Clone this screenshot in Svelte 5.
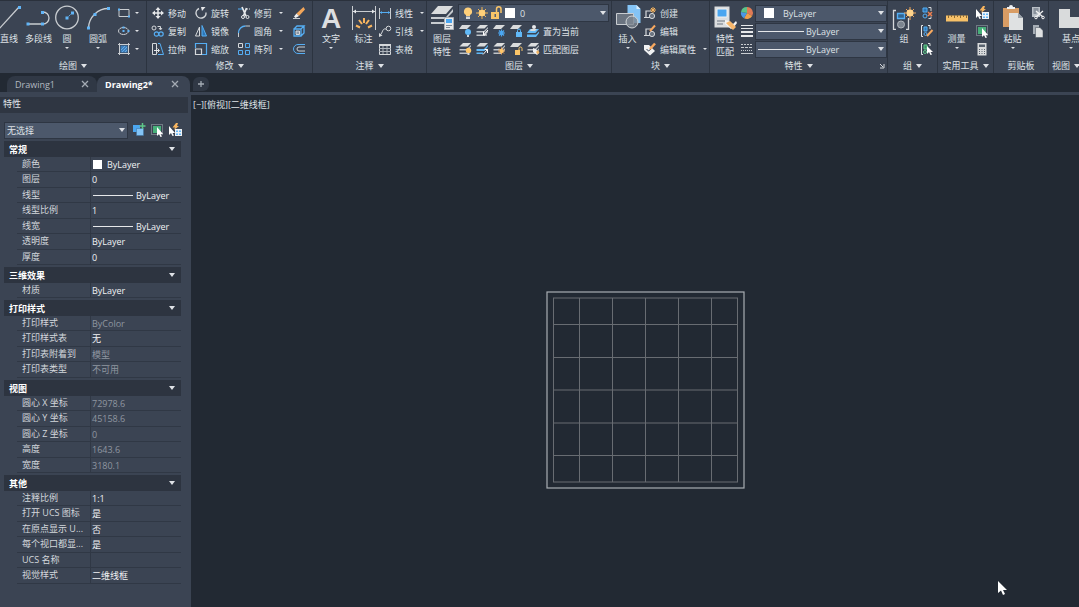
<script lang="ts">
  interface Prop {
    name: string;
    value: string;
    muted?: boolean;
    swatch?: boolean;
    line?: boolean;
  }

  interface Section {
    title: string;
    rows: Prop[];
  }

  const modifyTools = [
    [{ icon: 'move', label: '移动' }, { icon: 'copy', label: '复制' }, { icon: 'stretch', label: '拉伸' }],
    [{ icon: 'rotate', label: '旋转' }, { icon: 'mirror', label: '镜像' }, { icon: 'scale', label: '缩放' }],
    [
      { icon: 'trim', label: '修剪', more: true },
      { icon: 'fillet', label: '圆角', more: true },
      { icon: 'array', label: '阵列', more: true },
    ],
    [{ icon: 'erase', title: '删除' }, { icon: 'explode', title: '分解' }, { icon: 'offset', title: '偏移' }],
  ];

  const sections: Section[] = [
    {
      title: '常规',
      rows: [
        { name: '颜色', value: 'ByLayer', swatch: true },
        { name: '图层', value: '0' },
        { name: '线型', value: 'ByLayer', line: true },
        { name: '线型比例', value: '1' },
        { name: '线宽', value: 'ByLayer', line: true },
        { name: '透明度', value: 'ByLayer' },
        { name: '厚度', value: '0' },
      ],
    },
    { title: '三维效果', rows: [{ name: '材质', value: 'ByLayer' }] },
    {
      title: '打印样式',
      rows: [
        { name: '打印样式', value: 'ByColor', muted: true },
        { name: '打印样式表', value: '无' },
        { name: '打印表附着到', value: '模型', muted: true },
        { name: '打印表类型', value: '不可用', muted: true },
      ],
    },
    {
      title: '视图',
      rows: [
        { name: '圆心 X 坐标', value: '72978.6', muted: true },
        { name: '圆心 Y 坐标', value: '45158.6', muted: true },
        { name: '圆心 Z 坐标', value: '0', muted: true },
        { name: '高度', value: '1643.6', muted: true },
        { name: '宽度', value: '3180.1', muted: true },
      ],
    },
    {
      title: '其他',
      rows: [
        { name: '注释比例', value: '1:1' },
        { name: '打开 UCS 图标', value: '是' },
        { name: '在原点显示 U...', value: '否' },
        { name: '每个视口都显...', value: '是' },
        { name: 'UCS 名称', value: '' },
        { name: '视觉样式', value: '二维线框' },
      ],
    },
  ];

  const gridX = [33.5, 66.5, 99.5, 132.5, 165.5];
  const gridY = [33.5, 66.5, 99, 132, 164.5];

  let collapsed = $state<Record<string, boolean>>({});
  let activeTab = $state('Drawing2*');
</script>

{#snippet small(icon, label = '', more = false, title = '')}
  <button class="tool" aria-label={label || title}>
    <svg class="icon"><use href="#{icon}" /></svg>
    {#if label}<span>{label}</span>{/if}
    {#if more}<i class="dot"></i>{/if}
  </button>
{/snippet}

{#snippet big(icon, lines, more = false)}
  <button class="big">
    <svg class="icon-lg"><use href="#{icon}" /></svg>
    {#each lines as line}<span>{line}</span>{/each}
    {#if more}<i class="dot"></i>{/if}
  </button>
{/snippet}

{#snippet heading(text, more = true)}
  <h2 class="panel-title">{text}{#if more}<i class="caret"></i>{/if}</h2>
{/snippet}

<!-- Icon sprite -->
<svg class="sprite" aria-hidden="true">
  <symbol id="stack" viewBox="0 0 14 14">
    <path d="M5 1h8L9.5 4.5H1.500z" fill="#dcdedf" />
    <path d="M1.500 7H9l4-4v1.500L9.500 8.500h-8zM1.500 10.500H9l4-4V8l-3.500 4h-8z" fill="#bfc4c9" />
  </symbol>

  <symbol id="line" viewBox="0 0 26 26">
    <path d="M-1 25 19 3" stroke="#c9cdd1" stroke-width="1.3" />
    <path d="M18 2h3v3h-3z" fill="#62b5f7" />
  </symbol>
  <symbol id="polyline" viewBox="0 0 26 26">
    <path d="M2 20h15a6 6 0 0 0 0-12" fill="none" stroke="#c9cdd1" stroke-width="1.3" />
    <path d="M.5 18.500h3v3h-3zM15 18.500h3v3h-3zM15 7h3v3h-3z" fill="#62b5f7" />
  </symbol>
  <symbol id="circle" viewBox="0 0 26 26">
    <circle cx="13" cy="13.5" r="11.3" fill="none" stroke="#c9cdd1" stroke-width="1.3" />
    <path d="m13 14 5-5" stroke="#62b5f7" stroke-dasharray="2 1" />
    <path d="M11.500 12.500h3v3h-3zM17 7.500h3v3h-3z" fill="#62b5f7" />
  </symbol>
  <symbol id="arc" viewBox="0 0 26 26">
    <path d="M3.500 24A20 20 0 0 1 23.500 4.500" fill="none" stroke="#c9cdd1" stroke-width="1.3" />
    <path d="M2 22.500h3v3H2zM8.500 9h3v3h-3zM22 3h3v3h-3z" fill="#62b5f7" />
  </symbol>
  <symbol id="rect" viewBox="0 0 14 14">
    <path d="M2 3.500h10v7H2z" fill="none" stroke="#c9cdd1" />
    <path d="M1 2.500h2v2H1zM11 9.500h2v2h-2z" fill="#62b5f7" />
  </symbol>
  <symbol id="ellipse" viewBox="0 0 14 14">
    <ellipse cx="6.5" cy="7" rx="5" ry="3.5" fill="none" stroke="#c9cdd1" />
    <path d="M5.500 6h2v2h-2zM5.500 2.500h2v2h-2zM10.500 6h2v2h-2z" fill="#62b5f7" />
  </symbol>
  <symbol id="hatch" viewBox="0 0 14 14">
    <path d="M3.500 3.500h7v7h-7z" fill="#3d7fbd" />
    <path d="m4 8 4-4M5 10l5-5M8 10l2-2" stroke="#7cc0f5" stroke-width=".7" />
    <path d="M1 2.500h12M1 11.500h12M2.500 1v12M11.500 1v12" stroke="#c9cdd1" />
  </symbol>

  <symbol id="move" viewBox="0 0 14 14">
    <path d="M7 2v10M2 7h10" stroke="#e6e8ea" stroke-width="1.5" />
    <path d="m7 1 2.500 3h-5zM7 13l2.500-3h-5zM1 7l3-2.500v5zM13 7l-3-2.500v5z" fill="#e6e8ea" />
  </symbol>
  <symbol id="copy" viewBox="0 0 14 14">
    <circle cx="3" cy="4" r="2" fill="none" stroke="#d5d8db" />
    <path d="M6.500 2.500h3V5M8 4l1.500 2L11 4" fill="none" stroke="#d5d8db" />
    <circle cx="5.5" cy="10" r="2.2" fill="none" stroke="#55aef4" stroke-width="1.2" />
    <circle cx="10" cy="10" r="2.2" fill="none" stroke="#55aef4" stroke-width="1.2" />
  </symbol>
  <symbol id="stretch" viewBox="0 0 14 14">
    <path d="M1.500 1.500h4v11h-4z" fill="none" stroke="#d5d8db" />
    <path d="M7 1.500h2l3.500 11H7" fill="none" stroke="#55aef4" />
    <path d="M3 8.500h5M6.500 6.500l2 2-2 2" fill="none" stroke="#e6e8ea" />
  </symbol>
  <symbol id="rotate" viewBox="0 0 14 14">
    <path d="M5 2.500a5 5 0 1 0 7 4" fill="none" stroke="#d5d8db" stroke-width="1.4" />
    <path d="M7 1h4.500L8 5z" fill="#e6e8ea" />
  </symbol>
  <symbol id="mirror" viewBox="0 0 14 14">
    <path d="M5.500 3v9h-4z" fill="none" stroke="#d5d8db" />
    <path d="M8 1.500V12h4.500z" fill="#2e76b5" stroke="#55aef4" />
  </symbol>
  <symbol id="scale" viewBox="0 0 14 14">
    <path d="M1.500 6V1.500h11v11H8" fill="none" stroke="#55aef4" stroke-width="1.2" />
    <path d="M1.500 7h6v5.500h-6z" fill="none" stroke="#d5d8db" stroke-width="1.2" />
  </symbol>
  <symbol id="trim" viewBox="0 0 14 14">
    <path d="M1 3h5" stroke="#55aef4" /><path d="M9 3h4" stroke="#d5d8db" stroke-dasharray="2 1" />
    <path d="m5 1 4 9M9.500 2l-3 8" stroke="#e6e8ea" stroke-width="1.7" />
    <circle cx="6" cy="11" r="1.5" fill="none" stroke="#e6e8ea" /><circle cx="10.5" cy="11" r="1.5" fill="none" stroke="#e6e8ea" />
  </symbol>
  <symbol id="fillet" viewBox="0 0 14 14">
    <path d="M1.500 9a7 7 0 0 1 7-7" fill="none" stroke="#55aef4" stroke-width="1.3" />
    <path d="M1.500 9v4M8.500 2H13" stroke="#c9cdd1" />
  </symbol>
  <symbol id="array" viewBox="0 0 14 14">
    <path d="M1.500 1.500h4v4h-4z" fill="none" stroke="#d5d8db" />
    <path d="M8.500 1.500h4v4h-4zM1.500 8.500h4v4h-4zM8.500 8.500h4v4h-4z" fill="none" stroke="#55aef4" />
  </symbol>
  <symbol id="erase" viewBox="0 0 14 14">
    <path d="m11.500 1 1.500 2.500L7 10 4.500 7.500z" fill="#f2a65a" /><path d="M4.500 7.500 2 10.500l1.500 1.500L7 10z" fill="#f1f1f1" />
    <path d="M1 12.500h7" stroke="#c9cdd1" />
  </symbol>
  <symbol id="explode" viewBox="0 0 14 14">
    <path d="M2 5h7v7H2zM2 5l3-3h7L9 5M12 2v7l-3 3" fill="none" stroke="#55aef4" stroke-width="1.3" />
    <path d="M4 7h3.500v3.500H4z" fill="#8d98a6" stroke="#d5d8db" />
  </symbol>
  <symbol id="offset" viewBox="0 0 14 14">
    <path d="M13 2.500H6a4.500 4.500 0 0 0 0 9h7" fill="none" stroke="#55aef4" />
    <path d="M13 5H7a2 2 0 0 0 0 4h6" fill="none" stroke="#c9cdd1" />
  </symbol>

  <symbol id="dimension" viewBox="0 0 26 26">
    <path d="M1.500 2v24M24.500 2v24M2 7.500h22" stroke="#c9cdd1" />
    <path d="m2 7.500 3-2v4zM24 7.500l-3-2v4z" fill="#e6e8ea" />
    <path d="M13 14v5M8 16l3 4M18 16l-3 4M5 21.500l4 2M21 21.500l-4 2" stroke="#f8b55f" stroke-width="2" />
  </symbol>
  <symbol id="linear" viewBox="0 0 14 14">
    <path d="M1.500 2v11M12.500 2v11" stroke="#c9cdd1" /><path d="M2 6.500h10" stroke="#55aef4" />
    <path d="m2 6.500 2-1.500v3zM12 6.500 10 5v3z" fill="#55aef4" />
  </symbol>
  <symbol id="leader" viewBox="0 0 14 14">
    <circle cx="10.5" cy="4.5" r="2.3" fill="none" stroke="#d5d8db" />
    <path d="M8 5C4 4 5 9 2 11" fill="none" stroke="#d5d8db" /><path d="M1 9v4l3.500-1.500z" fill="#d5d8db" />
  </symbol>
  <symbol id="table" viewBox="0 0 14 14">
    <path d="M1.500 2.500h11v10h-11z" fill="none" stroke="#d5d8db" /><path d="M1 3h12" stroke="#d5d8db" stroke-width="2" />
    <path d="M1 6.500h12M1 9.500h12M5 4v8M9 4v8" stroke="#aeb4bb" />
  </symbol>

  <symbol id="layers" viewBox="0 0 26 26">
    <path d="M9 2h15l-7 8H2z" fill="#dadcdd" />
    <path d="M2 13h15l7-8v3l-7 7H2zM2 18h15l4-4v4l-2 2H2z" fill="#c8ccd0" />
    <path d="M15.500 13.500h9v12h-9z" fill="#e9eaeb" stroke="#aab0b7" /><path d="M17 15h6v4h-6z" fill="#4ba6f0" />
    <path d="M17 21.500h6M17 23.500h4" stroke="#7f8995" />
  </symbol>
  <symbol id="bulb" viewBox="0 0 14 14">
    <path d="M7 1.500a4 4 0 0 1 2 7.500v1H5V9a4 4 0 0 1 2-7.500z" fill="#ffd07a" /><path d="M5 10.500h4V13H5z" fill="#d5d8db" />
  </symbol>
  <symbol id="sun" viewBox="0 0 14 14">
    <path d="M7 1v12M1 7h12M3 3l8 8M11 3l-8 8" stroke="#f0b455" /><circle cx="7" cy="7" r="3.3" fill="#ffd07a" />
  </symbol>
  <symbol id="unlock" viewBox="0 0 14 14">
    <path d="M2 6h8v7H2z" fill="#f9c468" /><path d="M7.500 6V3A2 2 0 0 1 12 3v4" fill="none" stroke="#f9c468" stroke-width="1.5" />
    <path d="M5.500 8H7v3H5.500z" fill="#57606d" />
  </symbol>
  <symbol id="layer-off" viewBox="0 0 14 14">
    <path d="M4 1h9L9 5H1z" fill="#d9dbdc" /><circle cx="10" cy="8" r="3" fill="#61b9f8" /><path d="M9 11h2v2H9z" fill="#d5d8db" />
  </symbol>
  <symbol id="layer-iso" viewBox="0 0 14 14">
    <use href="#stack" /><path d="M13 6 8.500 11V7.500M8.500 11H12" fill="none" stroke="#fff" />
  </symbol>
  <symbol id="layer-freeze" viewBox="0 0 14 14">
    <path d="M4 1h9L9 5H1z" fill="#d9dbdc" /><circle cx="9.500" cy="9" r="2" fill="#4ba6f0" />
    <path d="M9.500 5.500v7M6 9h7M7 6.500l5 5M12 6.500l-5 5" stroke="#4ba6f0" stroke-width="1.2" />
  </symbol>
  <symbol id="layer-lock" viewBox="0 0 14 14">
    <path d="M4 1h9L9 5H1z" fill="#d9dbdc" /><path d="M7 8h6v5H7z" fill="#61b9f8" /><path d="M8.500 8V6.500a1.500 1.500 0 0 1 3 0V8" fill="none" stroke="#61b9f8" />
  </symbol>
  <symbol id="layer-current" viewBox="0 0 14 14">
    <path d="M4 5h9L9.500 9H1zM1 10.500h9l3-3V9l-3 4H1z" fill="#61b9f8" /><circle cx="8" cy="3" r="2" fill="#e6e8ea" /><path d="M5 5h6L9 7H4z" fill="#d9dbdc" />
  </symbol>
  <symbol id="layer-on" viewBox="0 0 14 14">
    <use href="#stack" /><circle cx="10.5" cy="8.5" r="2.7" fill="#ffc76a" /><path d="M9.500 11h2v2h-2z" fill="#d5d8db" />
  </symbol>
  <symbol id="layer-uniso" viewBox="0 0 14 14">
    <path d="M5 1h8L9.500 4.500h-8z" fill="#d9dbdc" /><path d="M1.500 7H9l4-4v1.500L9.500 9h-8zM1.500 10.500H8V12H1.500z" fill="#61b9f8" />
    <path d="m8 12.500 4.500-5M9.500 7.500h3V11" fill="none" stroke="#fff" />
  </symbol>
  <symbol id="layer-thaw" viewBox="0 0 14 14">
    <use href="#stack" /><path d="M9.500 5.500v7M6 9h7M7 6.500l5 5M12 6.500l-5 5" stroke="#f2a65a" /><circle cx="9.5" cy="9" r="2" fill="#ffc76a" />
  </symbol>
  <symbol id="layer-unlock" viewBox="0 0 14 14">
    <path d="M4 1h9L9 5H1z" fill="#d9dbdc" /><path d="M6 8h5v5H6z" fill="#f9c468" /><path d="M10 8V6.500a1.500 1.500 0 0 1 3 0V9" fill="none" stroke="#f9c468" />
  </symbol>
  <symbol id="layer-match" viewBox="0 0 14 14">
    <use href="#stack" /><path d="m7 6 3 1 3 4-2 2-4-3z" fill="#f1f1f1" /><path d="m10 10 2-2 1.500 2.500-2 2z" fill="#f2b566" />
  </symbol>

  <symbol id="insert" viewBox="0 0 26 26">
    <path d="M12.500 1h9l4 4v14h-13z" fill="#84c4f6" /><path d="M21.500 1v4h4z" fill="#d8ecfb" />
    <path d="M1.500 9.500h17v11h-17z" fill="#6b7480" stroke="#c9cdd1" />
    <circle cx="17" cy="18" r="6" fill="#7e8791" fill-opacity=".8" stroke="#d0d4d7" />
  </symbol>
  <symbol id="block-create" viewBox="0 0 14 14">
    <path d="M3 11V5h5M1 11.500h6" fill="none" stroke="#d5d8db" stroke-width="1.2" /><circle cx="9" cy="10" r="2.6" fill="#6b7480" stroke="#d5d8db" />
    <path d="M10 1v6M7 4h6M8 2l4 4M12 2 8 6" stroke="#f8b55f" />
  </symbol>
  <symbol id="block-edit" viewBox="0 0 14 14">
    <path d="M3 11V5h5M1 11.500h6" fill="none" stroke="#d5d8db" stroke-width="1.2" /><circle cx="9" cy="10" r="2.6" fill="#6b7480" stroke="#d5d8db" />
    <path d="m7 7 5-5.500" stroke="#f8a95f" stroke-width="2" />
  </symbol>
  <symbol id="attr-edit" viewBox="0 0 14 14">
    <path d="M1 3h5l6 6-5 4.500L1 8z" fill="#f0f1f2" /><path d="m3.500 7 2 2L8 7" fill="none" stroke="#3b4453" />
    <path d="m7 7 5-5.500" stroke="#f8a95f" stroke-width="2.5" />
  </symbol>

  <symbol id="match" viewBox="0 0 26 26">
    <path d="M2.500 2.500h15v21h-15z" fill="#dcdee0" /><path d="M5 5h10v8H5z" fill="#4ba6f0" stroke="#f1f1f1" />
    <path d="M5 17h8M5 20h6" stroke="#6b7480" /><path d="m13 16 4 1 4 3 3-3 1 2-3 4-3 2-6-5z" fill="#f3f3f3" />
    <path d="m14 19 4-2 6 6-3 3z" fill="#f7b76c" />
  </symbol>
  <symbol id="wheel" viewBox="0 0 14 14">
    <path d="M7 7V1a6 6 0 0 1 5.200 9z" fill="#e07b56" /><path d="M7 7 12.200 10A6 6 0 0 1 4 12.200z" fill="#f0a04b" />
    <path d="M7 7 4 12.200A6 6 0 0 1 1 6z" fill="#4b98e6" /><path d="M7 7 1 6a6 6 0 0 1 6-5z" fill="#5cc389" />
  </symbol>
  <symbol id="weights" viewBox="0 0 14 14"><path d="M1 1h12v1H1zM1 4h12v1H1zM1 7h12v2H1zM1 11h12v2H1z" fill="#e6e8ea" /></symbol>
  <symbol id="linetypes" viewBox="0 0 14 14">
    <path d="M1 2.500h12" stroke="#c9cdd1" stroke-dasharray="2 1" /><path d="M1 5.500h12" stroke="#c9cdd1" stroke-dasharray="3 1" />
    <path d="M1 8.500h12" stroke="#c9cdd1" stroke-dasharray="1 1" /><path d="M1 11.500h12" stroke="#c9cdd1" />
  </symbol>

  <symbol id="group" viewBox="0 0 26 26">
    <path d="M5 6.500H2.500v19H5M15 25.500h2.500V14" fill="none" stroke="#d5d8db" stroke-width="1.3" />
    <path d="M6.500 9.500h7v5h-7z" fill="#34658f" stroke="#55aef4" stroke-width="1.3" /><circle cx="10" cy="20.5" r="3.5" fill="#7b848f" stroke="#aeb4bb" />
    <path d="M19 3v13M13 9h12M15 5l8 8M23 5l-8 8" stroke="#f2a65a" /><circle cx="19" cy="9" r="3.5" fill="#ffd48c" />
  </symbol>
  <symbol id="ungroup" viewBox="0 0 14 14">
    <path d="M3 2h4v4H3z" fill="#2e76b5" stroke="#55aef4" /><circle cx="5" cy="10" r="2" fill="none" stroke="#55aef4" />
    <path d="M8.500 1.500H11V5M8.500 12.500H11v-2" fill="none" stroke="#d5d8db" /><path d="m8 6 4 4M12 6l-4 4" stroke="#f08050" stroke-width="1.5" />
  </symbol>
  <symbol id="group-edit" viewBox="0 0 14 14">
    <path d="M3 1.500H1.500v11H3M8 1.500h2V5" fill="none" stroke="#e6e8ea" /><path d="M4 3h3v4H4z" fill="#2e76b5" stroke="#55aef4" /><circle cx="5.5" cy="10" r="1.5" fill="none" stroke="#55aef4" />
    <path d="m7 12 5.500-6" stroke="#f8a95f" stroke-width="2" />
  </symbol>
  <symbol id="group-select" viewBox="0 0 14 14">
    <path d="M3 1.500H1.500v11H3M8 1.500h2V4" fill="none" stroke="#e6e8ea" /><path d="M4 3h3v4H4z" fill="#3a8a60" stroke="#5fc88a" /><circle cx="5" cy="10" r="1.5" fill="none" stroke="#5fc88a" />
    <path d="M7 4v8l2-2 1.500 3 1.500-.5L10.500 10H13z" fill="#fff" />
  </symbol>

  <symbol id="measure" viewBox="0 0 26 26">
    <path d="M2 11.500h22v6H2z" fill="#f7c168" /><path d="M4.500 11v3M7.500 11v2M10.500 11v3M13.500 11v2M16.500 11v3M19.500 11v2M22.500 11v3" stroke="#8a6a37" />
  </symbol>
  <symbol id="quick-select" viewBox="0 0 14 14">
    <path d="M1 3v9l2-2 1.500 3 1.500-.5L4.500 10H7z" fill="#fff" /><path d="M8 0 4.500 4.500H7L6 7l5-4H9l1-3z" fill="#f8b55f" />
    <path d="M7 6h7v7H7z" fill="#eef2f5" /><path d="M8 7.500h2V9H8zM11 7.500h2V9h-2zM8 10.500h2V12H8zM11 10.500h2V12h-2z" fill="#62b5f7" />
  </symbol>
  <symbol id="select-all" viewBox="0 0 14 14">
    <path d="M1.500 1.500h11v10h-11z" fill="none" stroke="#a9b0b9" stroke-dasharray="1 1" /><path d="M3 3h8v7H3z" fill="#48b07a" />
    <path d="M7 4v9l2-2 1.500 3 1.500-.5L10.500 11H13z" fill="#fff" />
  </symbol>
  <symbol id="calc" viewBox="0 0 14 14">
    <path d="M2.500 1h9v12.500h-9z" fill="#d9dbdc" /><path d="M4 2.500h6V5H4z" fill="#5a6470" />
    <path d="M4 7.500h6M4 9.500h6M4 11.500h6" stroke="#5a6470" stroke-dasharray="1 1.500" />
  </symbol>
  <symbol id="paste" viewBox="0 0 26 26">
    <path d="M3 4h16v19H3z" fill="#d89c64" /><path d="M7 5V3h2a2 2 0 0 1 4 0h2v2z" fill="#f0f1f2" />
    <path d="M9 9h9l5 5v12H9z" fill="#dfe1e2" /><path d="M18 9v5h5z" fill="#9ba2aa" />
  </symbol>
  <symbol id="cut" viewBox="0 0 14 14">
    <path d="M1 1h8v10H1z" fill="#b9bfc6" /><path d="M2.500 3h5M2.500 5h5M2.500 7h3" stroke="#596370" />
    <path d="m5 5 7 6M12 5l-7 6" stroke="#f1f1f1" stroke-width="1.3" /><circle cx="5" cy="11.5" r="1.3" fill="none" stroke="#f1f1f1" /><circle cx="12" cy="11.5" r="1.3" fill="none" stroke="#f1f1f1" />
  </symbol>
  <symbol id="pages" viewBox="0 0 14 14">
    <path d="M2 1h6v9H2z" fill="#a6adb5" /><path d="M4.500 3.500H9l3 3v7H4.500z" fill="#dfe1e2" stroke="#3b4453" stroke-width=".5" />
  </symbol>
  <symbol id="base" viewBox="0 0 26 26"><path d="M1 5h11v8h14v11H1z" fill="#d9dbdc" /></symbol>
  <symbol id="pick-add" viewBox="0 0 14 14">
    <path d="M1 2h7v7H1z" fill="#4ba6f0" /><path d="M4.500 5.500h7v7h-7z" fill="#84c4f6" stroke="#3b6f9d" stroke-width=".5" />
    <path d="M10.500 0v6M7.500 3h6" stroke="#5fc88a" stroke-width="1.5" />
  </symbol>
</svg>

<div class="app">
  <header class="ribbon">
    <section class="panel draw">
      <div class="tools">
        <div class="edge">{@render big('line', ['直线'])}</div>
        {@render big('polyline', ['多段线'])}
        {@render big('circle', ['圆'], true)}
        {@render big('arc', ['圆弧'], true)}
        <div class="stack near">
          {@render small('rect', '', true, '矩形')}
          {@render small('ellipse', '', true, '椭圆')}
          {@render small('hatch', '', true, '图案填充')}
        </div>
      </div>
      {@render heading('绘图')}
    </section>

    <section class="panel modify">
      <div class="tools">
        {#each modifyTools as column}
          <div class="stack">
            {#each column as t}{@render small(t.icon, t.label, t.more, t.title)}{/each}
          </div>
        {/each}
      </div>
      {@render heading('修改')}
    </section>

    <section class="panel annotate">
      <div class="tools">
        <button class="big">
          <span class="letter">A</span>
          <span>文字</span>
          <i class="dot"></i>
        </button>
        {@render big('dimension', ['标注'])}
        <div class="stack">
          {@render small('linear', '线性', true)}
          {@render small('leader', '引线', true)}
          {@render small('table', '表格')}
        </div>
      </div>
      {@render heading('注释')}
    </section>

    <section class="panel layer">
      <div class="tools">
        {@render big('layers', ['图层', '特性'])}
        <div class="stack">
          <div class="combo layer-combo">
            <svg class="icon"><use href="#bulb" /></svg>
            <svg class="icon"><use href="#sun" /></svg>
            <svg class="icon"><use href="#unlock" /></svg>
            <span class="swatch"></span>
            <select aria-label="图层"><option>0</option></select>
          </div>
          <div class="row">
            {@render small('layer-off', '', false, '关')}
            {@render small('layer-iso', '', false, '隔离')}
            {@render small('layer-freeze', '', false, '冻结')}
            {@render small('layer-lock', '', false, '锁定')}
            {@render small('layer-current', '置为当前')}
          </div>
          <div class="row">
            {@render small('layer-on', '', false, '打开')}
            {@render small('layer-uniso', '', false, '取消隔离')}
            {@render small('layer-thaw', '', false, '解冻')}
            {@render small('layer-unlock', '', false, '解锁')}
            {@render small('layer-match', '匹配图层')}
          </div>
        </div>
      </div>
      {@render heading('图层')}
    </section>

    <section class="panel block">
      <div class="tools">
        {@render big('insert', ['插入'], true)}
        <div class="stack">
          {@render small('block-create', '创建')}
          {@render small('block-edit', '编辑')}
          {@render small('attr-edit', '编辑属性', true)}
        </div>
      </div>
      {@render heading('块')}
    </section>

    <section class="panel props">
      <div class="tools">
        {@render big('match', ['特性', '匹配'])}
        <div class="stack">
          <label class="row">
            <svg class="icon"><use href="#wheel" /></svg>
            <span class="combo color-combo"><span class="swatch"></span><select aria-label="对象颜色"><option>ByLayer</option></select></span>
          </label>
          <label class="row">
            <svg class="icon"><use href="#weights" /></svg>
            <span class="combo"><span class="sample"></span><select aria-label="线宽"><option>ByLayer</option></select></span>
          </label>
          <label class="row">
            <svg class="icon"><use href="#linetypes" /></svg>
            <span class="combo"><span class="sample"></span><select aria-label="线型"><option>ByLayer</option></select></span>
          </label>
        </div>
      </div>
      {@render heading('特性')}
      <button class="launcher" aria-label="特性选项板">
        <svg viewBox="0 0 6 6"><path d="m1 1 3 3M5 1v4H1" fill="none" stroke="#d5d8db" /></svg>
      </button>
    </section>

    <section class="panel groups">
      <div class="tools">
        {@render big('group', ['组'])}
        <div class="stack">
          {@render small('ungroup', '', false, '解除编组')}
          {@render small('group-edit', '', false, '组编辑')}
          {@render small('group-select', '', false, '组选择')}
        </div>
      </div>
      {@render heading('组')}
    </section>

    <section class="panel utils">
      <div class="tools">
        {@render big('measure', ['测量'], true)}
        <div class="stack">
          {@render small('quick-select', '', false, '快速选择')}
          {@render small('select-all', '', false, '全部选择')}
          {@render small('calc', '', false, '快速计算器')}
        </div>
      </div>
      {@render heading('实用工具')}
    </section>

    <section class="panel clipboard">
      <div class="tools">
        {@render big('paste', ['粘贴'], true)}
        <div class="stack">
          {@render small('cut', '', false, '剪切')}
          {@render small('pages', '', false, '复制剪裁')}
        </div>
      </div>
      {@render heading('剪贴板', false)}
    </section>

    <section class="panel view">
      <div class="tools">{@render big('base', ['基点'], true)}</div>
      {@render heading('视图')}
    </section>
  </header>

  <nav class="tabs">
    {#each ['Drawing1', 'Drawing2*'] as tab}
      <div class="tab" class:active={activeTab === tab}>
        <button class="tab-name" onclick={() => (activeTab = tab)}>{tab}</button>
        <button class="close" aria-label="关闭 {tab}">
          <svg viewBox="0 0 8 8"><path d="m1 1 6 6M7 1 1 7" stroke="#a4abb4" stroke-width="1.3" /></svg>
        </button>
      </div>
    {/each}
    <button class="new-tab" aria-label="新图形">
      <svg viewBox="0 0 8 8"><path d="M4 1v6M1 4h6" stroke="#a4abb4" stroke-width="1.3" /></svg>
    </button>
  </nav>

  <main>
    <aside>
      <h2 class="palette-title">特性</h2>
      <div class="picker">
        <div class="combo"><select aria-label="选择"><option>无选择</option></select></div>
        {@render small('pick-add', '', false, '切换 PICKADD')}
        {@render small('select-all', '', false, '选择对象')}
        {@render small('quick-select', '', false, '快速选择')}
      </div>
      {#each sections as section}
        <section class="group">
          <button class="group-title" onclick={() => (collapsed[section.title] = !collapsed[section.title])}>
            {section.title}<i class="caret"></i>
          </button>
          {#if !collapsed[section.title]}
            <table>
              <tbody>
                {#each section.rows as row}
                  <tr>
                    <th scope="row">{row.name}</th>
                    <td class:muted={row.muted}>
                      <div class="value">
                        {#if row.swatch}<span class="swatch"></span>{/if}
                        {#if row.line}<span class="sample"></span>{/if}
                        {row.value}
                      </div>
                    </td>
                  </tr>
                {/each}
              </tbody>
            </table>
          {/if}
        </section>
      {/each}
    </aside>

    <div class="canvas">
      <span class="viewport">[−][俯视][二维线框]</span>
      <svg class="drawing" viewBox="0 0 199 199">
        <rect x="1" y="1" width="197" height="196" fill="none" stroke="#a9adb3" stroke-width="1.2" />
        <g fill="none" stroke="#686c72">
          <rect x="7.5" y="7" width="184" height="184" />
          {#each gridX as x}<path d="M{x} 7v184" />{/each}
          {#each gridY as y}<path d="M7.500 {y}h184" />{/each}
        </g>
      </svg>
      <svg class="cursor" viewBox="0 0 10 15"><path d="M1 0v12l3-2.500L6 14l2-1-2-4h4z" fill="#fff" /></svg>
    </div>
  </main>
</div>

<style>
  :global(body) {
    background: #222933;
  }

  .app {
    display: flex;
    flex-direction: column;
    min-height: 100vh;
    overflow: hidden;
    color: #dfe2e6;
    font: 9px/13px 'Open Sans', 'Noto Sans CJK SC', sans-serif;
  }

  .sprite {
    position: absolute;
    width: 0;
    height: 0;
  }

  button,
  select {
    margin: 0;
    padding: 0;
    border: 0;
    background: none;
    color: inherit;
    font: inherit;
  }

  h2 {
    margin: 0;
    font: inherit;
  }

  /* Ribbon */
  .ribbon {
    display: flex;
    overflow: hidden;
    border-top: 1px solid #2a313c;
    background: #3b4453;
  }

  .panel {
    position: relative;
    flex: none;
    box-sizing: border-box;
    padding-top: 3px;
    border-right: 1px solid #2c3440;
  }

  .tools {
    display: grid;
    height: 54px;
    align-items: start;
  }

  .draw { width: 147px; }
  .modify { width: 166px; }
  .annotate { width: 114px; }
  .layer { width: 185px; }
  .block { width: 98px; }
  .props { width: 178px; }
  .groups { width: 50px; }
  .utils { width: 56px; }
  .clipboard { width: 55px; }
  .view { width: 48px; }

  .draw .tools { grid-template-columns: 24px 29px 28px 34px auto; }
  .modify .tools { grid-template-columns: 43px 43px 55px auto; padding-left: 4px; }
  .annotate .tools { grid-template-columns: 36px 29px auto; }
  .layer .tools { grid-template-columns: 31px 1fr; }
  .block .tools { grid-template-columns: 31px auto; }
  .props .tools { grid-template-columns: 30px 1fr; }
  .groups .tools { grid-template-columns: 32px auto; }
  .utils .tools { grid-template-columns: 37px auto; }
  .clipboard .tools { grid-template-columns: 37px auto; }
  .view .tools { grid-template-columns: 44px; }

  .panel-title {
    display: flex;
    justify-content: center;
    align-items: center;
    gap: 4px;
    height: 15px;
  }

  .view .panel-title {
    justify-content: flex-start;
    padding-left: 3px;
  }

  .stack {
    display: flex;
    flex-direction: column;
  }

  .near {
    padding-left: 2px;
  }

  .row {
    display: flex;
    align-items: center;
    gap: 3px;
    height: 18px;
  }

  .tool {
    display: flex;
    align-items: center;
    gap: 3px;
    height: 18px;
    white-space: nowrap;
  }

  .icon {
    flex: none;
    width: 14px;
    height: 14px;
  }

  .icon-lg {
    flex: none;
    width: 26px;
    height: 26px;
    margin-bottom: 2px;
  }

  .letter {
    height: 26px;
    margin-bottom: 2px;
    color: #dcdee0;
    font: bold 28px/30px 'Liberation Sans', sans-serif;
  }

  .big {
    display: flex;
    flex-direction: column;
    align-items: center;
    white-space: nowrap;
  }

  .edge .big {
    align-items: flex-start;
  }

  .dot {
    width: 0;
    border: 2px solid transparent;
    border-top-color: #dfe2e6;
    border-bottom: 0;
  }

  .tool .dot {
    margin-left: 4px;
  }

  .near .dot {
    margin-left: 1px;
  }

  .big .dot {
    margin-top: 2px;
  }

  .caret {
    flex: none;
    width: 0;
    border: 3px solid transparent;
    border-top: 4px solid #dfe2e6;
    border-bottom: 0;
  }

  .combo {
    display: flex;
    flex: 1;
    align-items: center;
    box-sizing: border-box;
    height: 17px;
    padding: 0 2px;
    border: 1px solid #2e3643;
    background: #4c586b;
  }

  .combo::after {
    content: '';
    border: 3px solid transparent;
    border-top: 4px solid #dfe2e6;
    border-bottom: 0;
  }

  .combo select {
    flex: 1;
    min-width: 0;
    appearance: none;
    outline: 0;
  }

  .layer-combo {
    flex: none;
    height: 18px;
    margin-right: 2px;
  }

  .layer-combo .swatch {
    margin: 0 5px 0 2px;
  }

  .swatch {
    flex: none;
    width: 10px;
    height: 10px;
    background: #fff;
  }

  .color-combo .swatch {
    margin: 0 9px 0 6px;
  }

  .sample {
    flex: none;
    width: 46px;
    height: 1px;
    margin-right: 2px;
    background: #e6e8ea;
  }

  .props .row {
    gap: 1px;
  }

  .props .big,
  .layer .big {
    width: 30px;
  }

  .launcher {
    position: absolute;
    right: 2px;
    bottom: 4px;
    display: flex;
  }

  .launcher svg {
    width: 6px;
    height: 6px;
  }

  /* File tabs */
  .tabs {
    display: flex;
    align-items: flex-end;
    height: 19px;
    padding-left: 7px;
    border-bottom: 3px solid #3b4453;
    background: #222933;
  }

  .tab {
    display: flex;
    align-items: center;
    justify-content: space-between;
    box-sizing: border-box;
    min-width: 90px;
    height: 16px;
    padding: 0 8px;
    border-radius: 8px 8px 0 0;
    background: #303845;
    color: #b3b9c1;
  }

  .tab.active {
    min-width: 93px;
    padding-right: 11px;
    background: #3b4453;
    color: #fff;
    font-weight: bold;
  }

  .close,
  .new-tab {
    display: flex;
  }

  .close svg,
  .new-tab svg {
    width: 8px;
    height: 8px;
  }

  .new-tab {
    align-items: center;
    height: 14px;
    margin: 0 0 1px 3px;
    padding: 0 4px;
    border-radius: 6px 6px 6px 0;
    background: #303845;
  }

  /* Properties palette */
  main {
    display: flex;
    flex: 1;
  }

  aside {
    flex: none;
    box-sizing: border-box;
    width: 191px;
    padding: 2px 3px 0 0;
    background: #3b4453;
  }

  .palette-title {
    height: 16px;
    padding-left: 3px;
    background: #2f3642;
  }

  .picker {
    display: flex;
    align-items: center;
    gap: 4px;
    padding: 8px 6px 2px 4px;
  }

  .group {
    margin: 0 7px 2px 4px;
  }

  .group-title {
    display: flex;
    align-items: center;
    justify-content: space-between;
    width: 100%;
    height: 16px;
    padding: 0 6px 0 5px;
    background: #2d3440;
    color: #fff;
    font-weight: bold;
  }

  table {
    width: 164px;
    margin-left: 13px;
    border-collapse: separate;
    border-spacing: 0;
    table-layout: fixed;
  }

  th,
  td {
    box-sizing: border-box;
    height: 15px;
    padding: 0;
    border-bottom: 1px solid #303845;
    line-height: 13px;
    vertical-align: top;
    white-space: nowrap;
  }

  tr:nth-child(even) > * {
    height: 16px;
  }

  th {
    width: 74px;
    padding-left: 5px;
    border-right: 1px solid #303845;
    color: #d3d7dc;
    font-weight: normal;
    text-align: left;
  }

  td {
    padding: 1px 0 0 1px;
    color: #f1f2f4;
  }

  .muted {
    color: #8f96a0;
  }

  .value {
    display: flex;
    align-items: center;
    height: 13px;
  }

  .value .swatch {
    width: 9px;
    height: 9px;
    margin: 0 5px 0 1px;
  }

  .value .sample {
    width: 40px;
    margin: 0 3px 0 1px;
  }

  /* Model space */
  .canvas {
    position: relative;
    flex: 1;
    padding: 3px 2px;
    background: #222933;
  }

  .drawing {
    position: absolute;
    left: 355px;
    top: 196px;
    width: 199px;
    height: 199px;
  }

  .cursor {
    position: absolute;
    left: 806px;
    top: 486px;
    width: 10px;
    height: 15px;
  }
</style>
